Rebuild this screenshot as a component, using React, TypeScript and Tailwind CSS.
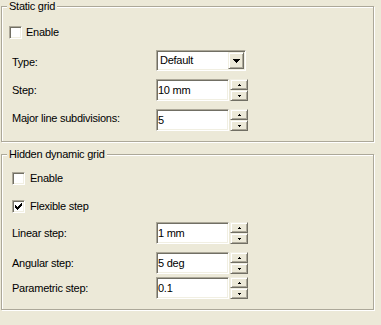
import type { ReactNode } from 'react';

const raised =
  'border border-t-[#f1efe2] border-l-[#f1efe2] border-b-[#716f64] border-r-[#716f64] bg-[#ece9d8] shadow-[inset_1px_1px_0_#fff,inset_-1px_-1px_0_#aca899]';
const sunken =
  'border border-t-[#aca899] border-l-[#aca899] border-b-white border-r-white bg-white shadow-[inset_1px_1px_0_#716f64,inset_-1px_-1px_0_#f1efe2]';

function Group({ title, className, children }: { title: string; className: string; children: ReactNode }) {
  return (
    <div
      className={`relative ml-[1px] w-[373px] border border-[#aca899] shadow-[1px_1px_0_#fff,inset_1px_1px_0_#fff] ${className}`}
    >
      <span className="absolute left-[5px] top-[-7px] bg-[#ece9d8] px-[2px]">{title}</span>
      {children}
    </div>
  );
}

function Check({ label, checked, className }: { label: string; checked?: boolean; className: string }) {
  return (
    <div className={`flex h-[13px] items-center ${className}`}>
      <span className={`flex h-[13px] w-[13px] shrink-0 items-center justify-center ${sunken}`}>
        {checked && (
          <svg width="7" height="7" viewBox="0 0 7 7" shapeRendering="crispEdges">
            <path d="M6 0h1v1h-1zM5 1h2v1h-2zM0 2h1v1h-1zM4 2h3v1h-3zM0 3h2v1h-2zM3 3h3v1h-3zM0 4h5v1h-5zM1 5h3v1h-3zM2 6h1v1h-1z" />
          </svg>
        )}
      </span>
      <span>{label}</span>
    </div>
  );
}

function Row({ label, className, labelClass = '', children }: { label: string; className: string; labelClass?: string; children: ReactNode }) {
  return (
    <div className={`flex items-center ${className}`}>
      <span className={`w-[154px] shrink-0 pl-[10px] ${labelClass}`}>{label}</span>
      {children}
    </div>
  );
}

function SpinButton({ up }: { up?: boolean }) {
  return (
    <span className={`flex h-[11px] w-[18px] items-center justify-center ${raised}`}>
      <svg width="3" height="2" viewBox="0 0 3 2" shapeRendering="crispEdges">
        <path d={up ? 'M1 0H2V1H3V2H0V1H1Z' : 'M0 0H3V1H2V2H1V1H0Z'} />
      </svg>
    </span>
  );
}

function Spin({ value }: { value: string }) {
  return (
    <div className="flex h-[22px]">
      <div className={`flex h-[22px] w-[73px] items-center pl-[1px] ${sunken}`}>{value}</div>
      <div className="ml-[1px] flex flex-col">
        <SpinButton up />
        <SpinButton />
      </div>
    </div>
  );
}

function Select({ value }: { value: string }) {
  return (
    <div className={`flex h-[21px] w-[90px] items-center justify-between p-[1px] pl-[3px] ${sunken}`}>
      <span>{value}</span>
      <span className={`flex h-[17px] w-[16px] items-center justify-center ${raised}`}>
        <svg width="7" height="4" viewBox="0 0 7 4" shapeRendering="crispEdges">
          <path d="M0 0H7V1H6V2H5V3H4V4H3V3H2V2H1V1H0Z" />
        </svg>
      </span>
    </div>
  );
}

export default function App() {
  return (
    <div className="h-[325px] w-[381px] overflow-hidden bg-[#ece9d8] pt-[6px] font-['Liberation_Sans',Arial,sans-serif] text-[11px] leading-[13px] tracking-[-0.25px] text-black">
      {/* Static grid */}
      <Group title="Static grid" className="h-[136px]">
        <Check label="Enable" className="ml-[7px] mt-[19px] gap-[4px]" />
        <Row label="Type:" className="mt-[11px]" labelClass="pt-[4px]">
          <Select value="Default" />
        </Row>
        <Row label="Step:" className="mt-[8px]">
          <Spin value="10 mm" />
        </Row>
        <Row label="Major line subdivisions:" className="mt-[8px]" labelClass="pb-[4px]">
          <Spin value="5" />
        </Row>
      </Group>

      {/* Hidden dynamic grid */}
      <Group title="Hidden dynamic grid" className="mt-[12px] h-[156px]">
        <Check label="Enable" className="ml-[10px] mt-[17px] gap-[5px]" />
        <Check label="Flexible step" checked className="ml-[10px] mt-[15px] gap-[5px]" />
        <Row label="Linear step:" className="mt-[9px]">
          <Spin value="1 mm" />
        </Row>
        <Row label="Angular step:" className="mt-[8px]">
          <Spin value="5 deg" />
        </Row>
        <Row label="Parametric step:" className="mt-[3px]">
          <Spin value="0.1" />
        </Row>
      </Group>
    </div>
  );
}
